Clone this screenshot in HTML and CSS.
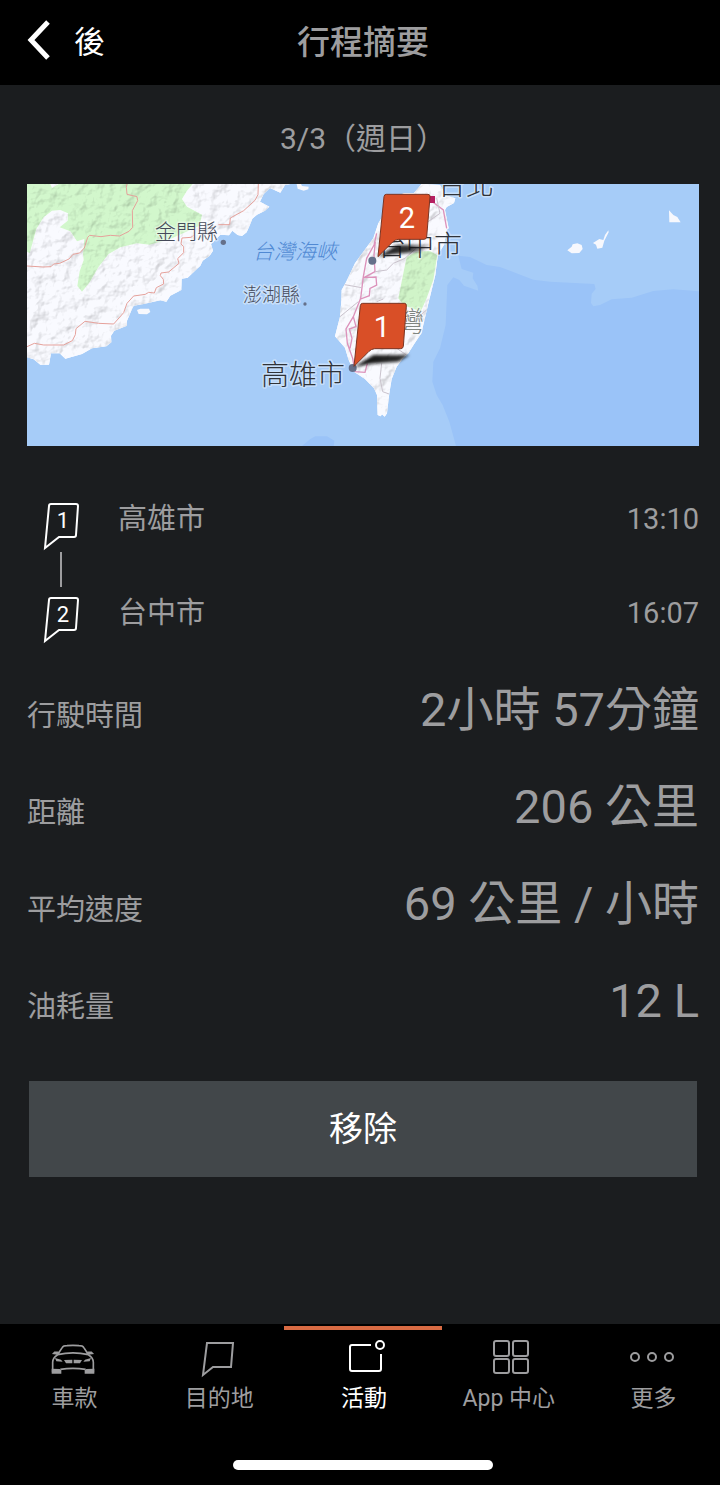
FILE: index.html
```html
<!DOCTYPE html>
<html lang="zh-Hant">
<head>
<meta charset="utf-8">
<meta name="viewport" content="width=device-width, initial-scale=1">
<title>行程摘要</title>
<link rel="stylesheet" href="styles.css">
</head>
<body>
<div class="app">
  <header class="header">
    <button class="back" type="button">
      <svg class="back-icon" viewBox="0 0 24 40" aria-hidden="true"><path d="M21 2 4 20 21 38"/></svg>
      <span>後</span>
    </button>
    <h1 class="title">行程摘要</h1>
  </header>

  <main class="content">
    <p class="date">3/3（週日）</p>

    <svg class="map" viewBox="0 0 672 262" role="img" aria-label="路線地圖">
      <defs>
        <filter id="relief" x="0" y="0" width="100%" height="100%" color-interpolation-filters="sRGB">
          <feTurbulence type="fractalNoise" baseFrequency="0.025" numOctaves="4" seed="8" result="n"/>
          <feDiffuseLighting in="n" surfaceScale="9" diffuseConstant="1.15" lighting-color="#fff" result="l"><feDistantLight azimuth="225" elevation="54"/></feDiffuseLighting>
          <feColorMatrix in="l" type="matrix" values=".3 0 0 0 .72 .3 0 0 0 .72 .3 0 0 0 .72 0 0 0 1 0" result="g"/>
          <feComposite in="g" in2="SourceGraphic" operator="in" result="c"/>
          <feBlend in="SourceGraphic" in2="c" mode="multiply"/>
        </filter>
        <filter id="soft" x="-20%" y="-50%" width="140%" height="200%"><feGaussianBlur stdDeviation="4"/></filter>
        <linearGradient id="shade" x1="0" x2="1"><stop offset="0" stop-color="#111"/><stop offset=".7" stop-color="#111" stop-opacity=".85"/><stop offset="1" stop-color="#222" stop-opacity=".2"/></linearGradient>
        <clipPath id="coastClip"><path id="coast" d="M0 0H790L774 3 760 26 729 12 710 30 699 53 727 68 714 80 690 92 676 104 669 122 659 145 645 156 632 153 616 140 606 154 580 152 552 180 558 200 548 215 527 230 520 245 482 281 464 284 463 318 430 335 418 353 400 349 350 360 320 365 315 375 300 410 300 425 262 440 252 455 253 475 238 487 195 493 165 510 115 524 98 508 72 508 66 542 40 542 20 526 0 520Z"/></clipPath>
        <clipPath id="isleClip"><path id="isle" d="M575 27 552 54 520 54 466 110 445 145 430 190 400 230 375 265 348 322 335 345 334 378 330 425 315 484 345 518 356 555 372 590 405 612 432 640 441 660 443 720 452 724 456 718 464 725 471 715 478 655 485 612 500 575 520 548 535 535 552 508 574 475 594 390 616 300 624 238 642 210 650 165 656 160 645 105 650 96 672 84 676 70 650 62 630 30Z"/></clipPath>
      </defs>
      <rect width="672" height="262" fill="#a6ccf8"/>
      <g transform="scale(.33333)">
        <path transform="translate(1239 -27)" fill="#9ac3f8" d="M55 242 90 246 140 270 180 276 280 314 330 320 463 327 467 342 455 356 453 384 460 394 480 390 515 373 575 368 640 348 700 343 777 349V813H48L28 740 8 690-10 660-23 620-20 560 0 520 17 450 22 330 40 307 58 315 72 332 115 347 112 332 98 310 100 293 65 282Z"/>
        <path fill="#9ac3f8" d="M825 786 850 765 865 757 900 757 922 770 920 786Z"/>
        <use href="#coast" fill="#f9faff" filter="url(#relief)"/>
        <g clip-path="url(#coastClip)">
          <path filter="url(#relief)" fill="#d2f7cc" d="M0 0H70L75 12 95 0H497L480 20 465 45 480 68 525 92 518 125 430 165 368 182 330 178 280 190 245 210 215 248 188 295 165 323 151 306 158 262 170 228 168 210 172 165 150 172 130 142 98 130 122 110 123 88 100 78 75 80 50 100 28 135 8 208 0 203Z"/>
          <path class="road" d="M300 0 298 10 300 31 330 38 332 50 316 80 317 130 306 142 278 156 250 154 222 158 188 154 182 160 172 192 158 207 138 211 126 225 98 238 80 240 72 248 48 249 0 246M0 488 22 478 50 483 110 483 136 470 145 452 147 434 174 412 215 418 260 420 290 386 300 358 320 336 355 331 365 325 382 327 388 311 410 300 409 286 400 275 402 267 425 264 456 238 452 224 470 206 470 188 462 180 465 162 492 160 500 154M574 122 608 122 610 102 650 80 684 49 693 32 694 0"/>
        </g>
        <path fill="#f7f8fd" d="M330 378 340 374 366 374 370 384 360 391 335 390ZM809 0 812 14 830 20 844 16 845 8 825 6 822 0Z"/>
        <g transform="translate(609 -27)">
          <use href="#isle" fill="#f9faff" filter="url(#relief)"/>
          <g clip-path="url(#isleClip)">
            <path filter="url(#relief)" fill="#d0f4c8" d="M530 245 560 230 600 228 622 240 610 315 590 370 572 410 520 390 505 370 520 295Z"/>
            <path class="track" d="M440 175 432 210 410 250 400 305 392 370 370 425 348 462 352 505 368 550 375 590 405 592 412 565M436 200 432 240 435 290 402 308 438 306 440 330 420 340 418 362 392 372M370 425 378 455 358 462 366 490 360 520M600 75 640 105 650 160"/>
            <path class="county" d="M436 290 470 285 490 265 525 250 560 218M338 328 395 338M330 425 385 380M455 565 450 610 458 650 480 658M440 380 460 372M560 430 590 405M580 150 630 115 620 70M485 430 500 520 530 540"/>
          </g>
          <rect x="592" y="63" width="23" height="21" fill="#b51e61"/>
        </g>
        <g transform="translate(1239 -27)" fill="#f7f8fd"><path d="M382 226 395 215 398 208 412 205 425 210 428 222 418 234 395 235ZM459 204 478 192 490 195 495 180 505 166 506 172 493 197 487 218 472 221 468 209ZM687 106 700 120 712 126 722 142H688Z"/></g>
        <g transform="translate(609 -27)" fill="#65708a"><circle cx="427" cy="257" r="12"/><circle cx="368" cy="579" r="12"/><circle cx="225" cy="387" r="5"/><circle cx="-20" cy="202" r="8"/></g>
      </g>
      <g class="place">
        <text class="small" x="128" y="55">金門縣</text>
        <text class="minor" x="216" y="118">澎湖縣</text>
        <text class="sea" x="226" y="75">台灣海峽</text>
        <text class="region" x="369" y="148">灣</text>
        <text x="411" y="11">台北</text>
        <text x="351" y="72">台中市</text>
        <text x="234" y="201">高雄市</text>
      </g>
      <g transform="scale(.33333) translate(609 -27)">
        <path filter="url(#soft)" fill="url(#shade)" d="M445 245 500 210 605 210 570 230 490 238ZM373 576 430 540 538 540 505 560 420 566Z"/>
        <path class="pin" d="M469 58H594Q601 58 600 66L590 186Q589 193 582 193H505Q495 194 488 201L444 245 462 65Q463 58 469 58Z"/>
        <path class="pin" d="M398 385H523Q530 385 529 393L520 514Q519 521 512 521H434Q424 522 417 529L372 574 391 392Q392 385 398 385Z"/>
      </g>
      <g class="pin-label"><text x="380" y="44">2</text><text x="355" y="153">1</text></g>
    </svg>

    <ol class="stops">
      <li class="stop">
        <svg class="marker" viewBox="0 0 36 48" aria-hidden="true"><path d="M8 2H33Q35 2 35 4L33 33Q33 35 31 35H16L2 46 6 4Q6 2 8 2Z"/><text x="20" y="26">1</text></svg>
        <span>高雄市</span><time>13:10</time>
      </li>
      <li class="stop">
        <svg class="marker" viewBox="0 0 36 48" aria-hidden="true"><path d="M8 2H33Q35 2 35 4L33 32Q33 34 31 34H16L2 45 6 4Q6 2 8 2Z"/><text x="20" y="26">2</text></svg>
        <span>台中市</span><time>16:07</time>
      </li>
    </ol>

    <dl class="stats">
      <div class="stat"><dt>行駛時間</dt><dd>2小時 57分鐘</dd></div>
      <div class="stat"><dt>距離</dt><dd>206 公里</dd></div>
      <div class="stat"><dt>平均速度</dt><dd>69 公里 / 小時</dd></div>
      <div class="stat"><dt>油耗量</dt><dd>12 L</dd></div>
    </dl>

    <button class="remove" type="button">移除</button>
  </main>

  <footer class="footer">
    <nav class="tabs">
      <a class="tab" href="#car">
        <svg class="tab-icon" viewBox="0 0 48 36" aria-hidden="true">
          <g class="car" transform="scale(.33333) translate(-149 -81)">
            <path d="M173 117 186 97Q189 92 200 92 218 90 236 92 247 92 250 97L263 117M172 119Q218 108 264 119M172 119Q157 128 157 142V172M264 119Q279 128 279 142V172M180 163Q218 157 256 163M174 112H163L160 115 172 117M262 112H273L276 115 264 117"/>
            <path class="solid" d="M154 161 178 162 183 166V176H154ZM282 161 258 162 253 166V176H282ZM164 129 182 134 187 140 168 139ZM272 129 254 134 249 140 268 139ZM191 135 216 134V145H197ZM245 135 220 134V145H239Z"/>
          </g>
        </svg><span>車款</span></a>
      <a class="tab" href="#destination">
        <svg class="tab-icon" viewBox="0 0 48 36" aria-hidden="true"><path d="M12 1H38L36 25H18L8 33Z"/></svg><span>目的地</span></a>
      <a class="tab active" href="#activity" aria-current="page">
        <svg class="tab-icon" viewBox="0 0 48 36" aria-hidden="true"><path d="M31 3H12Q10 3 10 5V27Q10 29 12 29H39Q41 29 41 27V12"/><circle cx="40" cy="3" r="4"/></svg><span>活動</span></a>
      <a class="tab" href="#apps">
        <svg class="tab-icon" viewBox="0 0 48 36" aria-hidden="true"><rect x="9" y="-1" width="15" height="15" rx="2"/><rect x="28" y="-1" width="15" height="15" rx="2"/><rect x="9" y="17" width="15" height="14" rx="2"/><rect x="28" y="17" width="15" height="14" rx="2"/></svg><span>App 中心</span></a>
      <a class="tab" href="#more">
        <svg class="tab-icon" viewBox="0 0 48 36" aria-hidden="true"><circle cx="5" cy="15" r="4"/><circle cx="22" cy="15" r="4"/><circle cx="39" cy="15" r="4"/></svg><span>更多</span></a>
    </nav>
    <div class="home-bar"></div>
  </footer>
</div>
</body>
</html>
```
FILE: styles.css
```css
* { box-sizing: border-box; }
html { background: #000; }
body {
  margin: 0;
  overflow-x: hidden;
  background: #1b1d1f;
  color: #9d9d9f;
  font-family: Roboto, "Noto Sans CJK TC", sans-serif;
  font-size: 29px;
  line-height: 40px;
}
button { border: 0; font: inherit; cursor: pointer; }
.app {
  display: flex;
  flex-direction: column;
  width: calc(100% + 6px);
  min-height: 100vh;
}
.header {
  display: grid;
  grid-template-columns: 1fr auto 1fr;
  align-items: center;
  height: 85px;
  padding: 0 27px;
  background: #000;
}
.back {
  display: flex;
  align-items: center;
  gap: 23px;
  padding: 0;
  background: none;
  color: #fff;
  font-size: 31px;
}
.back-icon {
  width: 24px;
  height: 40px;
  margin-bottom: 6px;
  fill: none;
  stroke: #fff;
  stroke-width: 5;
}
.title { margin: 0; font-size: 33px; font-weight: 500; }
.content { flex: 1; padding: 0 27px; }
.date {
  margin: 0;
  padding: 34px 0 25px;
  font-size: 30px;
  text-align: center;
}
.map { display: block; width: 100%; overflow: hidden; }
.map .road { fill: none; stroke: #e5a19b; stroke-width: 3; }
.map .track { fill: none; stroke: #dc92bb; stroke-width: 4; }
.map .county { fill: none; stroke: #c9c2cc; stroke-width: 3; }
.map .pin { fill: #d94f27; stroke: #7b3422; stroke-width: 3; }
.place {
  fill: #2f3238;
  font-family: "Noto Sans CJK TC", sans-serif;
  font-size: 28px;
  font-weight: 300;
  paint-order: stroke;
  stroke: #fff;
  stroke-opacity: .4;
  stroke-width: 3;
  stroke-linejoin: round;
}
.place .small { font-size: 21px; fill: #454a5a; }
.place .minor { font-size: 19px; fill: #454a5a; }
.place .sea { font-size: 21px; font-style: italic; fill: #5089d3; stroke: none; }
.place .region { fill: #7f8580; }
.pin-label { fill: #fff; font-size: 29px; text-anchor: middle; }
.stops { margin: 0; padding: 53px 0 0; list-style: none; }
.stop {
  position: relative;
  display: flex;
  align-items: flex-start;
  height: 94px;
  padding-left: 16px;
}
.stop span { flex: 1; margin-left: 39px; }
.stop:first-child::after {
  content: "";
  position: absolute;
  left: 33px;
  top: 53px;
  width: 2px;
  height: 35px;
  background: #9d9d9f;
}
.marker { width: 36px; height: 48px; margin-top: 3px; overflow: visible; }
.marker path { fill: none; stroke: #fff; stroke-width: 2; }
.marker text { fill: #fff; font-size: 22px; text-anchor: middle; }
.stats { margin: 0; }
.stat {
  display: flex;
  align-items: baseline;
  justify-content: space-between;
  height: 97px;
}
.stat dd { margin: 0; font-size: 47px; line-height: 46px; }
.remove {
  display: block;
  width: calc(100% - 4px);
  height: 96px;
  margin: 6px 2px 40px;
  background: #42474a;
  color: #fff;
  font-size: 34px;
}
.footer { height: 161px; padding-top: 2px; background: #000; }
.tabs {
  display: grid;
  grid-template-columns: repeat(5, 1fr);
  padding-left: 2px;
}
.tab {
  position: relative;
  display: flex;
  flex-direction: column;
  align-items: center;
  padding-top: 16px;
  color: #9d9d9f;
  font-size: 23px;
  line-height: 42px;
  text-decoration: none;
}
.tab.active { color: #fff; }
.tab.active::before {
  content: "";
  position: absolute;
  top: 0;
  left: -8px;
  right: -6px;
  height: 4px;
  background: #d96b43;
}
.tab-icon {
  width: 48px;
  height: 36px;
  overflow: visible;
  fill: none;
  stroke: currentColor;
  stroke-width: 2;
}
.tab-icon .car { stroke-width: 5; }
.tab-icon .solid { fill: currentColor; stroke: none; }
.home-bar {
  width: 260px;
  height: 10px;
  margin: 40px auto 0;
  border-radius: 5px;
  background: #fff;
}
```
